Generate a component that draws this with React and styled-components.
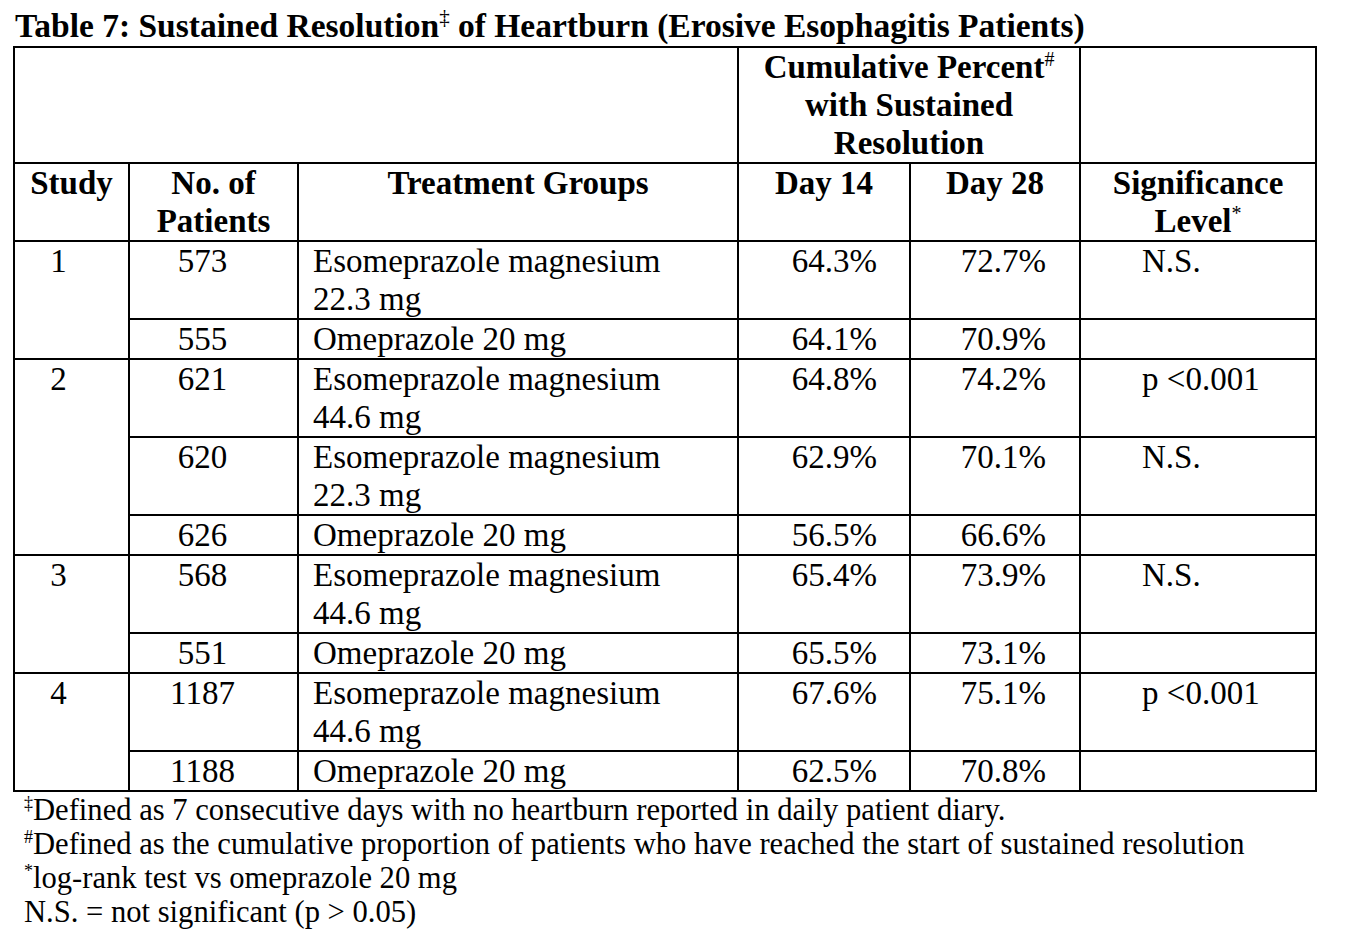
import React from "react";
import styled, { createGlobalStyle } from "styled-components";

const Global = createGlobalStyle`
  html, body { margin: 0; padding: 0; background: #fff; }
  body { font-family: "Liberation Serif", "Times New Roman", serif; color: #000; }
`;

const Page = styled.div`
  padding: 7px 0 0 13px;
  width: 1359px;
  box-sizing: border-box;
`;

const Title = styled.h1`
  margin: 0 0 1px 2px;
  font-size: 33.5px;
  line-height: 38px;
  font-weight: bold;
  white-space: nowrap;
`;

const Sup = styled.span`
  font-size: ${(p) => p.$size || 19}px;
  line-height: 0;
  vertical-align: ${(p) => p.$raise || "0.62em"};
  font-weight: ${(p) => (p.$bold ? "bold" : "normal")};
`;

const Table = styled.table`
  border-collapse: collapse;
  table-layout: fixed;
  width: 1302px;
  font-size: 33px;
  line-height: 38px;
`;

const Cell = styled.td`
  border: 2px solid #000;
  padding: 0;
  vertical-align: top;
  white-space: nowrap;
  overflow: hidden;
`;

const HeadCell = styled(Cell)`
  font-weight: bold;
  text-align: center;
`;

const StudyCell = styled(Cell)`
  text-align: center;
  padding-right: 26px;
`;

const CountCell = styled(Cell)`
  text-align: center;
  padding-right: 22px;
`;

const TreatCell = styled(Cell)`
  padding-left: 14px;
`;

const PctCell = styled(Cell)`
  text-align: right;
  padding-right: ${(p) => p.$pr}px;
`;

const SigCell = styled(Cell)`
  padding-left: 61px;
`;

const Notes = styled.div`
  margin: 1px 0 0 11px;
  font-size: 30.6px;
  line-height: 34px;
`;

const Note = styled.div`
  white-space: nowrap;
`;

const studies = [
  {
    id: "1",
    rows: [
      { n: "573", t: ["Esomeprazole magnesium", "22.3 mg"], d14: "64.3%", d28: "72.7%", sig: "N.S." },
      { n: "555", t: ["Omeprazole 20 mg"], d14: "64.1%", d28: "70.9%", sig: "" },
    ],
  },
  {
    id: "2",
    rows: [
      { n: "621", t: ["Esomeprazole magnesium", "44.6 mg"], d14: "64.8%", d28: "74.2%", sig: "p <0.001" },
      { n: "620", t: ["Esomeprazole magnesium", "22.3 mg"], d14: "62.9%", d28: "70.1%", sig: "N.S." },
      { n: "626", t: ["Omeprazole 20 mg"], d14: "56.5%", d28: "66.6%", sig: "" },
    ],
  },
  {
    id: "3",
    rows: [
      { n: "568", t: ["Esomeprazole magnesium", "44.6 mg"], d14: "65.4%", d28: "73.9%", sig: "N.S." },
      { n: "551", t: ["Omeprazole 20 mg"], d14: "65.5%", d28: "73.1%", sig: "" },
    ],
  },
  {
    id: "4",
    rows: [
      { n: "1187", t: ["Esomeprazole magnesium", "44.6 mg"], d14: "67.6%", d28: "75.1%", sig: "p <0.001" },
      { n: "1188", t: ["Omeprazole 20 mg"], d14: "62.5%", d28: "70.8%", sig: "" },
    ],
  },
];

export default function App() {
  return (
    <>
      <Global />
      <Page>
        <Title>
          Table 7: Sustained Resolution<Sup $size={21} $bold={false}>‡</Sup> of Heartburn (Erosive Esophagitis Patients)
        </Title>
        <Table>
          <colgroup>
            <col style={{ width: 115 }} />
            <col style={{ width: 169 }} />
            <col style={{ width: 440 }} />
            <col style={{ width: 172 }} />
            <col style={{ width: 170 }} />
            <col style={{ width: 236 }} />
          </colgroup>
          <thead>
            <tr>
              <HeadCell colSpan={3} />
              <HeadCell colSpan={2}>
                Cumulative Percent<Sup $size={20}>#</Sup>
                <br />
                with Sustained
                <br />
                Resolution
              </HeadCell>
              <HeadCell />
            </tr>
            <tr>
              <HeadCell>Study</HeadCell>
              <HeadCell>
                No. of
                <br />
                Patients
              </HeadCell>
              <HeadCell>Treatment Groups</HeadCell>
              <HeadCell>Day 14</HeadCell>
              <HeadCell>Day 28</HeadCell>
              <HeadCell>
                Significance
                <br />
                Level<Sup $size={20}>*</Sup>
              </HeadCell>
            </tr>
          </thead>
          <tbody>
            {studies.map((s) =>
              s.rows.map((r, i) => (
                <tr key={s.id + "-" + i}>
                  {i === 0 && <StudyCell rowSpan={s.rows.length}>{s.id}</StudyCell>}
                  <CountCell>{r.n}</CountCell>
                  <TreatCell>
                    {r.t.map((line, k) => (
                      <div key={k}>{line}</div>
                    ))}
                  </TreatCell>
                  <PctCell $pr={32}>{r.d14}</PctCell>
                  <PctCell $pr={33}>{r.d28}</PctCell>
                  <SigCell>{r.sig}</SigCell>
                </tr>
              ))
            )}
          </tbody>
        </Table>
        <Notes>
          <Note>
            <Sup $size={18}>‡</Sup>Defined as 7 consecutive days with no heartburn reported in daily patient diary.
          </Note>
          <Note>
            <Sup $size={18}>#</Sup>Defined as the cumulative proportion of patients who have reached the start of sustained resolution
          </Note>
          <Note>
            <Sup $size={18}>*</Sup>log-rank test vs omeprazole 20 mg
          </Note>
          <Note>N.S. = not significant (p &gt; 0.05)</Note>
        </Notes>
      </Page>
    </>
  );
}
